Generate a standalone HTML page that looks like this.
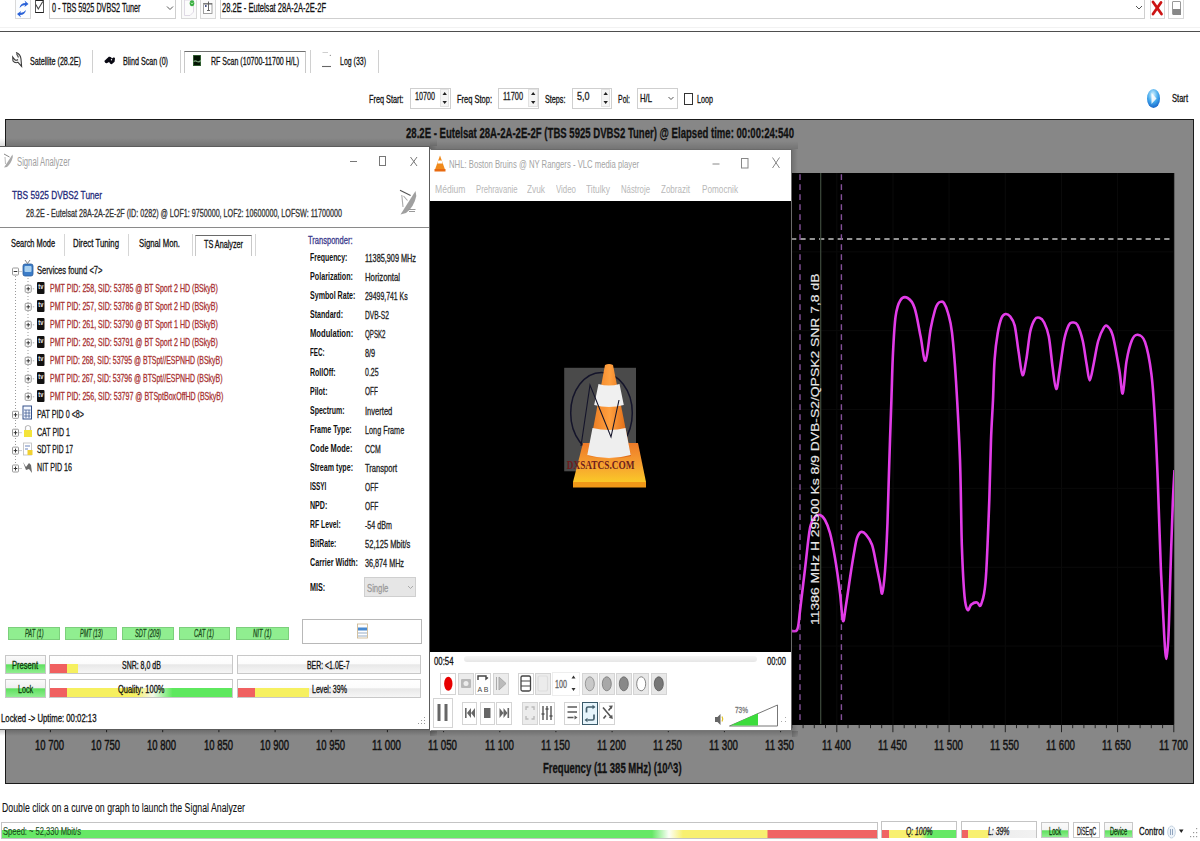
<!DOCTYPE html>
<html><head><meta charset="utf-8"><title>RF Scan</title>
<style>
html,body{margin:0;padding:0;width:1200px;height:841px;overflow:hidden;background:#fff;position:relative;font-family:"Liberation Sans",sans-serif}
.t{position:absolute;white-space:pre;transform-origin:0 0;-webkit-text-stroke:0.3px currentColor}
svg{position:absolute;left:0;top:0}
</style></head><body>
<div style="position:absolute;left:15px;top:-1px;width:15.5px;height:19.5px;border:1px solid #d9d9d9;box-sizing:border-box;background:#fbfdff"></div>
<svg width="1200" height="841" style="pointer-events:none"><path d="M19.5 8 q1 -5 6 -5 l-1 -2.5 l4 3.5 l-4 3 l0.5 -2 q-3 0 -5.5 3z" fill="#2a62d8"/><path d="M26 10 q-1 5 -6 5 l1 2.5 l-4 -3.5 l4 -3 l-0.5 2 q3 0 5.5 -3z" fill="#2a62d8"/></svg>
<div style="position:absolute;left:34.5px;top:-1px;width:9.0px;height:13.5px;border:1.2px solid #555;border-top:2px solid #222;border-bottom:1.5px solid #222;box-sizing:border-box;background:#fff"></div>
<svg width="1200" height="841"><path d="M35.8 4.5 l2.5 4.5 l4.5 -7.5" stroke="#444" stroke-width="1.1" fill="none"/></svg>
<div style="position:absolute;left:49px;top:-1px;width:127px;height:19.5px;border:1px solid #cfcfcf;box-sizing:border-box;background:#fff"></div>
<span class="t" style="left:51.5px;top:1.6px;font:normal normal 12px/12px 'Liberation Sans';color:#111;transform:scaleX(0.6012);">0 - TBS 5925 DVBS2 Tuner</span>
<svg width="1200" height="841"><path d="M167 6.5 l3 3 l3 -3" stroke="#555" stroke-width="1" fill="none"/></svg>
<div style="position:absolute;left:181px;top:-1px;width:15.5px;height:19.5px;border:1px solid #d9d9d9;box-sizing:border-box;background:#fafafa"></div>
<svg width="1200" height="841"><path d="M184.5 0 h9 v12 l-3.5 3.5 h-5.5z" fill="#fcfcfc" stroke="#d8d0e0" stroke-width="0.8"/><ellipse cx="192" cy="3.2" rx="2.3" ry="3" fill="#3cb043"/><path d="M190.8 2.5 l1.2 1.5 l1.2 -1.5" stroke="#bff0bf" stroke-width="0.8" fill="none"/></svg>
<div style="position:absolute;left:200px;top:-1px;width:16px;height:19.5px;border:1px solid #d9d9d9;box-sizing:border-box;background:#fafafa"></div>
<svg width="1200" height="841"><rect x="203.5" y="3.5" width="8.5" height="10" fill="#fff" stroke="#888" stroke-width="0.8"/><path d="M204 4 h8 M208.5 1.5 v9 M207 10.5 h3" stroke="#555" stroke-width="0.9"/><rect x="205" y="5.2" width="1.6" height="1.6" fill="#1a2a6a"/></svg>
<div style="position:absolute;left:220px;top:-1px;width:925px;height:19.5px;border:1px solid #cfcfcf;box-sizing:border-box;background:#fff"></div>
<span class="t" style="left:222.0px;top:1.6px;font:normal normal 12px/12px 'Liberation Sans';color:#111;transform:scaleX(0.6287);">28.2E - Eutelsat 28A-2A-2E-2F</span>
<svg width="1200" height="841"><path d="M1136 6 l3 3 l3 -3" stroke="#555" stroke-width="1" fill="none"/></svg>
<div style="position:absolute;left:1149.5px;top:-1px;width:15.5px;height:19.5px;border:1px solid #d9d9d9;box-sizing:border-box;background:#fff"></div>
<svg width="1200" height="841"><path d="M1153 2 L1161.5 14 M1161 2.5 L1153 14" stroke="#cc1414" stroke-width="2.8" stroke-linecap="round"/></svg>
<div style="position:absolute;left:1168px;top:-1px;width:16px;height:19.5px;border:1px solid #d9d9d9;box-sizing:border-box;background:#fff"></div>
<div style="position:absolute;left:1172px;top:1px;width:9px;height:14px;border:1px solid #999;box-sizing:border-box;border-radius:1px"></div>
<div style="position:absolute;left:1172.5px;top:9px;width:8.0px;height:5.5px;background:#888"></div>
<div style="position:absolute;left:0px;top:30.8px;width:1200px;height:1.4999999999999964px;background:#4e4e4e"></div>
<div style="position:absolute;left:0px;top:27px;width:1200px;height:1px;background:#f2f2f2"></div>
<svg width="1200" height="841"><path d="M16 52.5 q4.5 1.5 5 6.5 l0.6 7.3 l-3.6 -4 q-3 1.2 -5 -1.3 l-0.3 -4 l2.2 2.8 q1.5 1 3 -0.3" fill="#f4f4f4" stroke="#3a3a3a" stroke-width="1.1"/><path d="M16.5 53.5 l2 4" stroke="#555" stroke-width="1.3"/><path d="M104.3 61 l4.5 -4.2 q1.5 -0.5 2.5 0.8 l0.5 1 l2.2 -1.3 l1 1 l-0.4 3.5 l-2.6 2.3 q-1.5 0.5 -2.3 -1 l-0.6 -1 l-2.4 1.2 q-1.6 0.2 -2.4 -2.3z" fill="#0a0a14"/><circle cx="111.5" cy="59.8" r="0.7" fill="#fff"/></svg>
<span class="t" style="left:30.0px;top:55.6px;font:normal normal 11px/11px 'Liberation Sans';color:#111;transform:scaleX(0.6516);">Satellite (28.2E)</span>
<div style="position:absolute;left:92px;top:50px;width:1px;height:23px;background:#d0d0d0"></div>
<span class="t" style="left:123.0px;top:55.6px;font:normal normal 11px/11px 'Liberation Sans';color:#111;transform:scaleX(0.6513);">Blind Scan (0)</span>
<div style="position:absolute;left:179.5px;top:50px;width:1.0px;height:23px;background:#d0d0d0"></div>
<div style="position:absolute;left:183.5px;top:50.5px;width:122.0px;height:22.5px;border-top:1.5px solid #707070;border-left:1px solid #c8c8c8;border-right:1px solid #c8c8c8;box-sizing:border-box;background:#fff"></div>
<div style="position:absolute;left:192.7px;top:55.2px;width:8.600000000000023px;height:11.0px;background:#031403;border:0.8px solid #2e5a2e;box-sizing:border-box;border-radius:0.5px"></div>
<svg width="1200" height="841"><path d="M193.5 61.5 q2 -1.2 3.5 0 q2 1 4 -1" stroke="#7aa27a" stroke-width="1.1" fill="none"/></svg>
<span class="t" style="left:211.0px;top:56.4px;font:normal normal 11px/11px 'Liberation Sans';color:#111;transform:scaleX(0.6406);">RF Scan (10700-11700 H/L)</span>
<div style="position:absolute;left:309.5px;top:50px;width:1.0px;height:23px;background:#d0d0d0"></div>
<svg width="1200" height="841"><path d="M322.5 52.5 h5.5" stroke="#cfcfcf" stroke-width="1"/><circle cx="330.3" cy="55.3" r="0.6" fill="#777"/><path d="M322 66.5 h9" stroke="#666" stroke-width="1.1"/></svg>
<span class="t" style="left:340.0px;top:56.4px;font:normal normal 11px/11px 'Liberation Sans';color:#111;transform:scaleX(0.6344);">Log (33)</span>
<div style="position:absolute;left:377.5px;top:50px;width:1.0px;height:23px;background:#d0d0d0"></div>
<span class="t" style="left:368.5px;top:93.5px;font:normal normal 11px/11px 'Liberation Sans';color:#111;transform:scaleX(0.6639);">Freq Start:</span>
<div style="position:absolute;left:410px;top:87.5px;width:40.5px;height:21.0px;border:1px solid #cfcfcf;box-sizing:border-box;background:#fff"></div>
<span class="t" style="left:415.0px;top:90.7px;font:normal normal 11px/11px 'Liberation Sans';color:#222;transform:scaleX(0.6537);">10700</span>
<div style="position:absolute;left:439.5px;top:89px;width:9.5px;height:18px;border:1px solid #e2e2e2;box-sizing:border-box;background:#f4f4f4"></div>
<svg width="1200" height="841"><path d="M442.5 95 l2.2 -3 l2.2 3z M442.5 101 l2.2 3 l2.2 -3z" fill="#222"/></svg>
<span class="t" style="left:456.5px;top:93.5px;font:normal normal 11px/11px 'Liberation Sans';color:#111;transform:scaleX(0.6815);">Freq Stop:</span>
<div style="position:absolute;left:498px;top:87.5px;width:41px;height:21.0px;border:1px solid #cfcfcf;box-sizing:border-box;background:#fff"></div>
<span class="t" style="left:503.0px;top:90.7px;font:normal normal 11px/11px 'Liberation Sans';color:#222;transform:scaleX(0.6716);">11700</span>
<div style="position:absolute;left:528px;top:89px;width:9.5px;height:18px;border:1px solid #e2e2e2;box-sizing:border-box;background:#f4f4f4"></div>
<svg width="1200" height="841"><path d="M531 95 l2.2 -3 l2.2 3z M531 101 l2.2 3 l2.2 -3z" fill="#222"/></svg>
<span class="t" style="left:544.5px;top:93.5px;font:normal normal 11px/11px 'Liberation Sans';color:#111;transform:scaleX(0.6573);">Steps:</span>
<div style="position:absolute;left:572px;top:87.5px;width:39.5px;height:21.0px;border:1px solid #cfcfcf;box-sizing:border-box;background:#fff"></div>
<span class="t" style="left:577.0px;top:90.7px;font:normal normal 11px/11px 'Liberation Sans';color:#222;transform:scaleX(0.8172);">5,0</span>
<div style="position:absolute;left:600.5px;top:89px;width:9.5px;height:18px;border:1px solid #e2e2e2;box-sizing:border-box;background:#f4f4f4"></div>
<svg width="1200" height="841"><path d="M603.5 95 l2.2 -3 l2.2 3z M603.5 101 l2.2 3 l2.2 -3z" fill="#222"/></svg>
<span class="t" style="left:618.0px;top:93.5px;font:normal normal 11px/11px 'Liberation Sans';color:#111;transform:scaleX(0.6326);">Pol:</span>
<div style="position:absolute;left:637px;top:88px;width:41px;height:20.5px;border:1px solid #cfcfcf;box-sizing:border-box;background:#fff"></div>
<span class="t" style="left:640.0px;top:93.2px;font:normal normal 11px/11px 'Liberation Sans';color:#111;transform:scaleX(0.7007);">H/L</span>
<svg width="1200" height="841"><path d="M668.5 97 l2.5 2.5 l2.5 -2.5" stroke="#555" stroke-width="1" fill="none"/></svg>
<div style="position:absolute;left:683.5px;top:93px;width:9.0px;height:11.5px;border:1.2px solid #333;box-sizing:border-box;background:#fff"></div>
<span class="t" style="left:697.0px;top:93.5px;font:normal normal 11px/11px 'Liberation Sans';color:#111;transform:scaleX(0.6535);">Loop</span>
<svg width="1200" height="841"><defs><radialGradient id="pb" cx="0.45" cy="0.3" r="0.8"><stop offset="0" stop-color="#d8f4ff"/><stop offset="0.5" stop-color="#41a8ec"/><stop offset="1" stop-color="#0a50c0"/></radialGradient></defs><ellipse cx="1153.5" cy="98.5" rx="6.5" ry="9.5" fill="url(#pb)"/><path d="M1151.5 93 l5 5.5 l-5 5.5z" fill="#fff" opacity="0.85"/></svg>
<span class="t" style="left:1172.0px;top:93.4px;font:normal normal 11px/11px 'Liberation Sans';color:#111;transform:scaleX(0.6886);">Start</span>
<div style="position:absolute;left:5px;top:119px;width:1189px;height:665px;background:#878787;border:1.5px solid #1a1a1a;box-sizing:border-box"></div>
<div style="position:absolute;left:50px;top:172.7px;width:1124px;height:552.0px;background:#000"></div>
<span class="t" style="left:405.8px;top:126.2px;font:normal bold 14.5px/14.5px 'Liberation Sans';color:#111;transform:scaleX(0.6603);">28.2E - Eutelsat 28A-2A-2E-2F (TBS 5925 DVBS2 Tuner) @ Elapsed time: 00:00:24:540</span>
<span class="t" style="left:542.7px;top:761.0px;font:normal bold 14.5px/14.5px 'Liberation Sans';color:#111;transform:scaleX(0.6577);">Frequency (11 385 MHz) (10^3)</span>
<svg width="1200" height="841"><line x1="50.4" y1="173" x2="50.4" y2="724.5" stroke="#0a0a0a" stroke-width="1"/><line x1="106.6" y1="173" x2="106.6" y2="724.5" stroke="#0a0a0a" stroke-width="1"/><line x1="162.7" y1="173" x2="162.7" y2="724.5" stroke="#0a0a0a" stroke-width="1"/><line x1="218.9" y1="173" x2="218.9" y2="724.5" stroke="#0a0a0a" stroke-width="1"/><line x1="275.1" y1="173" x2="275.1" y2="724.5" stroke="#0a0a0a" stroke-width="1"/><line x1="331.2" y1="173" x2="331.2" y2="724.5" stroke="#0a0a0a" stroke-width="1"/><line x1="387.4" y1="173" x2="387.4" y2="724.5" stroke="#0a0a0a" stroke-width="1"/><line x1="443.6" y1="173" x2="443.6" y2="724.5" stroke="#0a0a0a" stroke-width="1"/><line x1="499.8" y1="173" x2="499.8" y2="724.5" stroke="#0a0a0a" stroke-width="1"/><line x1="555.9" y1="173" x2="555.9" y2="724.5" stroke="#0a0a0a" stroke-width="1"/><line x1="612.1" y1="173" x2="612.1" y2="724.5" stroke="#0a0a0a" stroke-width="1"/><line x1="668.3" y1="173" x2="668.3" y2="724.5" stroke="#0a0a0a" stroke-width="1"/><line x1="724.4" y1="173" x2="724.4" y2="724.5" stroke="#0a0a0a" stroke-width="1"/><line x1="780.6" y1="173" x2="780.6" y2="724.5" stroke="#0a0a0a" stroke-width="1"/><line x1="836.8" y1="173" x2="836.8" y2="724.5" stroke="#0a0a0a" stroke-width="1"/><line x1="893.0" y1="173" x2="893.0" y2="724.5" stroke="#0a0a0a" stroke-width="1"/><line x1="949.1" y1="173" x2="949.1" y2="724.5" stroke="#0a0a0a" stroke-width="1"/><line x1="1005.3" y1="173" x2="1005.3" y2="724.5" stroke="#0a0a0a" stroke-width="1"/><line x1="1061.5" y1="173" x2="1061.5" y2="724.5" stroke="#0a0a0a" stroke-width="1"/><line x1="1117.6" y1="173" x2="1117.6" y2="724.5" stroke="#0a0a0a" stroke-width="1"/><line x1="1173.8" y1="173" x2="1173.8" y2="724.5" stroke="#0a0a0a" stroke-width="1"/><line x1="50" y1="251.9" x2="1174" y2="251.9" stroke="#0a0a0a" stroke-width="1"/><line x1="50" y1="330.7" x2="1174" y2="330.7" stroke="#0a0a0a" stroke-width="1"/><line x1="50" y1="409.6" x2="1174" y2="409.6" stroke="#0a0a0a" stroke-width="1"/><line x1="50" y1="488.4" x2="1174" y2="488.4" stroke="#0a0a0a" stroke-width="1"/><line x1="50" y1="567.3" x2="1174" y2="567.3" stroke="#0a0a0a" stroke-width="1"/><line x1="50" y1="646.1" x2="1174" y2="646.1" stroke="#0a0a0a" stroke-width="1"/><line x1="50.4" y1="724.7" x2="50.4" y2="732.2" stroke="#222" stroke-width="1"/><line x1="61.6" y1="724.7" x2="61.6" y2="728.2" stroke="#222" stroke-width="1"/><line x1="72.9" y1="724.7" x2="72.9" y2="728.2" stroke="#222" stroke-width="1"/><line x1="84.1" y1="724.7" x2="84.1" y2="728.2" stroke="#222" stroke-width="1"/><line x1="95.3" y1="724.7" x2="95.3" y2="728.2" stroke="#222" stroke-width="1"/><line x1="106.6" y1="724.7" x2="106.6" y2="732.2" stroke="#222" stroke-width="1"/><line x1="117.8" y1="724.7" x2="117.8" y2="728.2" stroke="#222" stroke-width="1"/><line x1="129.0" y1="724.7" x2="129.0" y2="728.2" stroke="#222" stroke-width="1"/><line x1="140.3" y1="724.7" x2="140.3" y2="728.2" stroke="#222" stroke-width="1"/><line x1="151.5" y1="724.7" x2="151.5" y2="728.2" stroke="#222" stroke-width="1"/><line x1="162.7" y1="724.7" x2="162.7" y2="732.2" stroke="#222" stroke-width="1"/><line x1="174.0" y1="724.7" x2="174.0" y2="728.2" stroke="#222" stroke-width="1"/><line x1="185.2" y1="724.7" x2="185.2" y2="728.2" stroke="#222" stroke-width="1"/><line x1="196.4" y1="724.7" x2="196.4" y2="728.2" stroke="#222" stroke-width="1"/><line x1="207.7" y1="724.7" x2="207.7" y2="728.2" stroke="#222" stroke-width="1"/><line x1="218.9" y1="724.7" x2="218.9" y2="732.2" stroke="#222" stroke-width="1"/><line x1="230.1" y1="724.7" x2="230.1" y2="728.2" stroke="#222" stroke-width="1"/><line x1="241.4" y1="724.7" x2="241.4" y2="728.2" stroke="#222" stroke-width="1"/><line x1="252.6" y1="724.7" x2="252.6" y2="728.2" stroke="#222" stroke-width="1"/><line x1="263.8" y1="724.7" x2="263.8" y2="728.2" stroke="#222" stroke-width="1"/><line x1="275.1" y1="724.7" x2="275.1" y2="732.2" stroke="#222" stroke-width="1"/><line x1="286.3" y1="724.7" x2="286.3" y2="728.2" stroke="#222" stroke-width="1"/><line x1="297.5" y1="724.7" x2="297.5" y2="728.2" stroke="#222" stroke-width="1"/><line x1="308.8" y1="724.7" x2="308.8" y2="728.2" stroke="#222" stroke-width="1"/><line x1="320.0" y1="724.7" x2="320.0" y2="728.2" stroke="#222" stroke-width="1"/><line x1="331.2" y1="724.7" x2="331.2" y2="732.2" stroke="#222" stroke-width="1"/><line x1="342.5" y1="724.7" x2="342.5" y2="728.2" stroke="#222" stroke-width="1"/><line x1="353.7" y1="724.7" x2="353.7" y2="728.2" stroke="#222" stroke-width="1"/><line x1="365.0" y1="724.7" x2="365.0" y2="728.2" stroke="#222" stroke-width="1"/><line x1="376.2" y1="724.7" x2="376.2" y2="728.2" stroke="#222" stroke-width="1"/><line x1="387.4" y1="724.7" x2="387.4" y2="732.2" stroke="#222" stroke-width="1"/><line x1="398.7" y1="724.7" x2="398.7" y2="728.2" stroke="#222" stroke-width="1"/><line x1="409.9" y1="724.7" x2="409.9" y2="728.2" stroke="#222" stroke-width="1"/><line x1="421.1" y1="724.7" x2="421.1" y2="728.2" stroke="#222" stroke-width="1"/><line x1="432.4" y1="724.7" x2="432.4" y2="728.2" stroke="#222" stroke-width="1"/><line x1="443.6" y1="724.7" x2="443.6" y2="732.2" stroke="#222" stroke-width="1"/><line x1="454.8" y1="724.7" x2="454.8" y2="728.2" stroke="#222" stroke-width="1"/><line x1="466.1" y1="724.7" x2="466.1" y2="728.2" stroke="#222" stroke-width="1"/><line x1="477.3" y1="724.7" x2="477.3" y2="728.2" stroke="#222" stroke-width="1"/><line x1="488.5" y1="724.7" x2="488.5" y2="728.2" stroke="#222" stroke-width="1"/><line x1="499.8" y1="724.7" x2="499.8" y2="732.2" stroke="#222" stroke-width="1"/><line x1="511.0" y1="724.7" x2="511.0" y2="728.2" stroke="#222" stroke-width="1"/><line x1="522.2" y1="724.7" x2="522.2" y2="728.2" stroke="#222" stroke-width="1"/><line x1="533.5" y1="724.7" x2="533.5" y2="728.2" stroke="#222" stroke-width="1"/><line x1="544.7" y1="724.7" x2="544.7" y2="728.2" stroke="#222" stroke-width="1"/><line x1="555.9" y1="724.7" x2="555.9" y2="732.2" stroke="#222" stroke-width="1"/><line x1="567.2" y1="724.7" x2="567.2" y2="728.2" stroke="#222" stroke-width="1"/><line x1="578.4" y1="724.7" x2="578.4" y2="728.2" stroke="#222" stroke-width="1"/><line x1="589.6" y1="724.7" x2="589.6" y2="728.2" stroke="#222" stroke-width="1"/><line x1="600.9" y1="724.7" x2="600.9" y2="728.2" stroke="#222" stroke-width="1"/><line x1="612.1" y1="724.7" x2="612.1" y2="732.2" stroke="#222" stroke-width="1"/><line x1="623.3" y1="724.7" x2="623.3" y2="728.2" stroke="#222" stroke-width="1"/><line x1="634.6" y1="724.7" x2="634.6" y2="728.2" stroke="#222" stroke-width="1"/><line x1="645.8" y1="724.7" x2="645.8" y2="728.2" stroke="#222" stroke-width="1"/><line x1="657.0" y1="724.7" x2="657.0" y2="728.2" stroke="#222" stroke-width="1"/><line x1="668.3" y1="724.7" x2="668.3" y2="732.2" stroke="#222" stroke-width="1"/><line x1="679.5" y1="724.7" x2="679.5" y2="728.2" stroke="#222" stroke-width="1"/><line x1="690.7" y1="724.7" x2="690.7" y2="728.2" stroke="#222" stroke-width="1"/><line x1="702.0" y1="724.7" x2="702.0" y2="728.2" stroke="#222" stroke-width="1"/><line x1="713.2" y1="724.7" x2="713.2" y2="728.2" stroke="#222" stroke-width="1"/><line x1="724.4" y1="724.7" x2="724.4" y2="732.2" stroke="#222" stroke-width="1"/><line x1="735.7" y1="724.7" x2="735.7" y2="728.2" stroke="#222" stroke-width="1"/><line x1="746.9" y1="724.7" x2="746.9" y2="728.2" stroke="#222" stroke-width="1"/><line x1="758.1" y1="724.7" x2="758.1" y2="728.2" stroke="#222" stroke-width="1"/><line x1="769.4" y1="724.7" x2="769.4" y2="728.2" stroke="#222" stroke-width="1"/><line x1="780.6" y1="724.7" x2="780.6" y2="732.2" stroke="#222" stroke-width="1"/><line x1="791.8" y1="724.7" x2="791.8" y2="728.2" stroke="#222" stroke-width="1"/><line x1="803.1" y1="724.7" x2="803.1" y2="728.2" stroke="#222" stroke-width="1"/><line x1="814.3" y1="724.7" x2="814.3" y2="728.2" stroke="#222" stroke-width="1"/><line x1="825.5" y1="724.7" x2="825.5" y2="728.2" stroke="#222" stroke-width="1"/><line x1="836.8" y1="724.7" x2="836.8" y2="732.2" stroke="#222" stroke-width="1"/><line x1="848.0" y1="724.7" x2="848.0" y2="728.2" stroke="#222" stroke-width="1"/><line x1="859.2" y1="724.7" x2="859.2" y2="728.2" stroke="#222" stroke-width="1"/><line x1="870.5" y1="724.7" x2="870.5" y2="728.2" stroke="#222" stroke-width="1"/><line x1="881.7" y1="724.7" x2="881.7" y2="728.2" stroke="#222" stroke-width="1"/><line x1="892.9" y1="724.7" x2="892.9" y2="732.2" stroke="#222" stroke-width="1"/><line x1="904.2" y1="724.7" x2="904.2" y2="728.2" stroke="#222" stroke-width="1"/><line x1="915.4" y1="724.7" x2="915.4" y2="728.2" stroke="#222" stroke-width="1"/><line x1="926.7" y1="724.7" x2="926.7" y2="728.2" stroke="#222" stroke-width="1"/><line x1="937.9" y1="724.7" x2="937.9" y2="728.2" stroke="#222" stroke-width="1"/><line x1="949.1" y1="724.7" x2="949.1" y2="732.2" stroke="#222" stroke-width="1"/><line x1="960.4" y1="724.7" x2="960.4" y2="728.2" stroke="#222" stroke-width="1"/><line x1="971.6" y1="724.7" x2="971.6" y2="728.2" stroke="#222" stroke-width="1"/><line x1="982.8" y1="724.7" x2="982.8" y2="728.2" stroke="#222" stroke-width="1"/><line x1="994.1" y1="724.7" x2="994.1" y2="728.2" stroke="#222" stroke-width="1"/><line x1="1005.3" y1="724.7" x2="1005.3" y2="732.2" stroke="#222" stroke-width="1"/><line x1="1016.5" y1="724.7" x2="1016.5" y2="728.2" stroke="#222" stroke-width="1"/><line x1="1027.8" y1="724.7" x2="1027.8" y2="728.2" stroke="#222" stroke-width="1"/><line x1="1039.0" y1="724.7" x2="1039.0" y2="728.2" stroke="#222" stroke-width="1"/><line x1="1050.2" y1="724.7" x2="1050.2" y2="728.2" stroke="#222" stroke-width="1"/><line x1="1061.5" y1="724.7" x2="1061.5" y2="732.2" stroke="#222" stroke-width="1"/><line x1="1072.7" y1="724.7" x2="1072.7" y2="728.2" stroke="#222" stroke-width="1"/><line x1="1083.9" y1="724.7" x2="1083.9" y2="728.2" stroke="#222" stroke-width="1"/><line x1="1095.2" y1="724.7" x2="1095.2" y2="728.2" stroke="#222" stroke-width="1"/><line x1="1106.4" y1="724.7" x2="1106.4" y2="728.2" stroke="#222" stroke-width="1"/><line x1="1117.6" y1="724.7" x2="1117.6" y2="732.2" stroke="#222" stroke-width="1"/><line x1="1128.9" y1="724.7" x2="1128.9" y2="728.2" stroke="#222" stroke-width="1"/><line x1="1140.1" y1="724.7" x2="1140.1" y2="728.2" stroke="#222" stroke-width="1"/><line x1="1151.3" y1="724.7" x2="1151.3" y2="728.2" stroke="#222" stroke-width="1"/><line x1="1162.6" y1="724.7" x2="1162.6" y2="728.2" stroke="#222" stroke-width="1"/><line x1="1173.8" y1="724.7" x2="1173.8" y2="732.2" stroke="#222" stroke-width="1"/><line x1="53.93" y1="239" x2="1172" y2="239" stroke="#c4c4c4" stroke-width="1.7" stroke-dasharray="5.3 4.03"/><line x1="800" y1="174.3" x2="800" y2="724" stroke="#84509a" stroke-width="1.4" stroke-dasharray="5.8 4.2"/><line x1="841.4" y1="174.3" x2="841.4" y2="724" stroke="#84509a" stroke-width="1.4" stroke-dasharray="5.8 4.2"/><line x1="820.7" y1="173" x2="820.7" y2="724" stroke="#3e4a3c" stroke-width="1.2"/><clipPath id="pc"><rect x="50" y="172.7" width="1124" height="552"/></clipPath><path d="M789.0 630.0 C790.3 630.0 795.2 633.2 797.0 630.0 C798.8 626.8 798.7 621.2 800.0 611.0 C801.3 600.8 803.3 582.8 805.0 569.0 C806.7 555.2 808.3 536.7 810.0 528.0 C811.7 519.3 813.3 519.2 815.0 517.0 C816.7 514.8 818.3 514.5 820.0 515.0 C821.7 515.5 823.3 517.0 825.0 520.0 C826.7 523.0 828.3 526.7 830.0 533.0 C831.7 539.3 833.3 548.0 835.0 558.0 C836.7 568.0 838.7 582.5 840.0 593.0 C841.3 603.5 842.0 619.0 843.0 621.0 C844.0 623.0 844.8 612.2 846.0 605.0 C847.2 597.8 848.7 586.7 850.0 578.0 C851.3 569.3 852.8 559.7 854.0 553.0 C855.2 546.3 855.8 541.5 857.0 538.0 C858.2 534.5 859.5 532.6 861.0 532.0 C862.5 531.4 864.2 532.5 866.0 534.6 C867.8 536.7 870.3 540.0 872.0 544.7 C873.7 549.4 874.7 556.6 876.0 563.0 C877.3 569.4 879.0 578.0 880.0 583.0 C881.0 588.0 881.4 595.3 882.2 593.3 C883.0 591.3 884.1 582.8 885.0 571.0 C885.9 559.2 886.8 540.7 887.5 522.5 C888.2 504.3 888.6 482.4 889.3 462.0 C889.9 441.6 890.8 418.2 891.4 400.0 C892.0 381.8 892.3 366.7 893.0 352.8 C893.7 338.9 894.4 325.2 895.6 316.4 C896.8 307.6 898.4 303.3 900.4 300.2 C902.4 297.1 905.3 296.7 907.7 298.0 C910.1 299.3 912.5 301.6 914.6 308.0 C916.8 314.4 918.8 327.8 920.6 336.6 C922.4 345.4 923.8 362.2 925.5 360.8 C927.2 359.4 929.1 337.0 930.7 328.5 C932.3 320.0 933.8 314.2 935.0 310.0 C936.2 305.8 937.0 304.9 938.0 303.5 C939.0 302.1 940.0 301.9 941.0 301.8 C942.0 301.7 942.8 301.1 944.0 303.0 C945.2 304.9 946.7 308.1 948.0 313.0 C949.3 317.9 950.7 321.2 952.0 332.5 C953.3 343.8 954.7 359.8 956.0 381.0 C957.3 402.2 959.0 432.3 960.0 460.0 C961.0 487.7 961.1 524.2 961.9 547.0 C962.7 569.8 963.6 586.3 964.6 596.8 C965.6 607.3 966.5 608.7 967.6 610.0 C968.7 611.3 969.8 605.6 971.4 604.4 C973.0 603.1 975.7 602.2 977.1 602.5 C978.5 602.8 979.1 605.8 979.8 606.0 C980.5 606.2 980.5 606.0 981.2 604.0 C981.9 602.0 983.1 599.5 984.0 594.0 C984.9 588.5 985.4 586.7 986.3 571.0 C987.2 555.3 988.5 521.8 989.3 500.0 C990.1 478.2 990.4 456.7 991.0 440.0 C991.6 423.3 992.4 413.4 993.0 400.0 C993.6 386.6 993.8 370.7 994.6 359.6 C995.4 348.5 996.5 340.3 997.7 333.3 C998.9 326.3 1000.3 321.0 1001.6 317.8 C1002.9 314.6 1004.1 314.2 1005.5 314.0 C1006.9 313.8 1008.5 314.4 1010.0 316.3 C1011.5 318.2 1013.3 319.7 1014.7 325.6 C1016.1 331.5 1017.3 343.7 1018.6 351.9 C1019.9 360.1 1021.2 373.7 1022.5 375.0 C1023.8 376.3 1025.0 366.8 1026.3 359.6 C1027.6 352.4 1028.8 338.5 1030.2 331.8 C1031.6 325.1 1033.2 321.7 1034.8 319.4 C1036.3 317.1 1038.0 317.3 1039.5 317.8 C1041.0 318.3 1042.5 319.4 1044.1 322.5 C1045.6 325.6 1047.4 328.9 1048.8 336.4 C1050.2 343.9 1051.4 358.5 1052.6 367.3 C1053.8 376.1 1055.0 388.5 1056.2 389.0 C1057.4 389.5 1058.3 378.6 1059.6 370.4 C1060.9 362.1 1062.7 347.1 1064.2 339.5 C1065.8 331.9 1067.5 327.6 1068.9 324.8 C1070.3 322.0 1071.3 322.5 1072.7 322.5 C1074.1 322.5 1075.7 321.7 1077.4 324.8 C1079.1 327.9 1081.3 334.4 1082.8 341.0 C1084.3 347.6 1085.4 357.6 1086.6 364.2 C1087.8 370.8 1088.5 380.5 1089.7 380.5 C1090.9 380.5 1092.2 370.8 1093.6 364.2 C1095.0 357.6 1096.5 347.1 1098.2 341.0 C1099.9 334.9 1102.2 330.3 1103.7 327.9 C1105.2 325.4 1106.0 325.0 1107.5 326.3 C1109.0 327.6 1110.8 328.4 1112.8 335.7 C1114.8 343.0 1117.6 360.4 1119.3 370.0 C1121.0 379.6 1121.5 394.9 1122.7 393.5 C1123.9 392.1 1125.0 370.3 1126.5 361.4 C1128.0 352.5 1130.1 344.4 1132.0 340.0 C1133.9 335.6 1135.5 334.5 1137.7 334.8 C1139.9 335.1 1142.7 335.5 1145.0 342.0 C1147.3 348.5 1149.8 361.5 1151.4 374.0 C1153.0 386.5 1153.7 399.2 1154.8 417.0 C1155.9 434.8 1156.8 456.0 1157.8 481.0 C1158.8 506.0 1159.7 541.3 1160.8 567.0 C1161.9 592.7 1163.3 619.7 1164.2 635.0 C1165.1 650.3 1165.7 659.0 1166.4 659.0 C1167.1 659.0 1167.8 650.3 1168.5 635.0 C1169.2 619.7 1169.9 589.1 1170.6 567.0 C1171.3 544.9 1172.1 518.8 1172.8 502.6 C1173.5 486.4 1174.2 475.4 1174.5 470.0" fill="none" stroke="#e23ce8" stroke-width="2.6" stroke-linejoin="round" clip-path="url(#pc)"/><text transform="translate(818.8 625) rotate(-90) scale(1.18 1)" font-family="Liberation Sans" font-size="11.8" fill="#e8e8e8" stroke="#e8e8e8" stroke-width="0.15">11386 MHz H 29500 Ks 8/9 DVB-S2/QPSK2 SNR 7,8 dB</text></svg>
<span class="t" style="left:35.1px;top:737.7px;font:normal normal 14px/14px 'Liberation Sans';color:#111;transform:scaleX(0.6771);-webkit-text-stroke:0.45px #111">10 700</span>
<span class="t" style="left:91.3px;top:737.7px;font:normal normal 14px/14px 'Liberation Sans';color:#111;transform:scaleX(0.6771);-webkit-text-stroke:0.45px #111">10 750</span>
<span class="t" style="left:147.4px;top:737.7px;font:normal normal 14px/14px 'Liberation Sans';color:#111;transform:scaleX(0.6771);-webkit-text-stroke:0.45px #111">10 800</span>
<span class="t" style="left:203.6px;top:737.7px;font:normal normal 14px/14px 'Liberation Sans';color:#111;transform:scaleX(0.6771);-webkit-text-stroke:0.45px #111">10 850</span>
<span class="t" style="left:259.8px;top:737.7px;font:normal normal 14px/14px 'Liberation Sans';color:#111;transform:scaleX(0.6771);-webkit-text-stroke:0.45px #111">10 900</span>
<span class="t" style="left:315.9px;top:737.7px;font:normal normal 14px/14px 'Liberation Sans';color:#111;transform:scaleX(0.6771);-webkit-text-stroke:0.45px #111">10 950</span>
<span class="t" style="left:372.1px;top:737.7px;font:normal normal 14px/14px 'Liberation Sans';color:#111;transform:scaleX(0.6941);-webkit-text-stroke:0.45px #111">11 000</span>
<span class="t" style="left:428.3px;top:737.7px;font:normal normal 14px/14px 'Liberation Sans';color:#111;transform:scaleX(0.6941);-webkit-text-stroke:0.45px #111">11 050</span>
<span class="t" style="left:484.5px;top:737.7px;font:normal normal 14px/14px 'Liberation Sans';color:#111;transform:scaleX(0.6941);-webkit-text-stroke:0.45px #111">11 100</span>
<span class="t" style="left:540.6px;top:737.7px;font:normal normal 14px/14px 'Liberation Sans';color:#111;transform:scaleX(0.6941);-webkit-text-stroke:0.45px #111">11 150</span>
<span class="t" style="left:596.8px;top:737.7px;font:normal normal 14px/14px 'Liberation Sans';color:#111;transform:scaleX(0.6941);-webkit-text-stroke:0.45px #111">11 200</span>
<span class="t" style="left:653.0px;top:737.7px;font:normal normal 14px/14px 'Liberation Sans';color:#111;transform:scaleX(0.6941);-webkit-text-stroke:0.45px #111">11 250</span>
<span class="t" style="left:709.1px;top:737.7px;font:normal normal 14px/14px 'Liberation Sans';color:#111;transform:scaleX(0.6941);-webkit-text-stroke:0.45px #111">11 300</span>
<span class="t" style="left:765.3px;top:737.7px;font:normal normal 14px/14px 'Liberation Sans';color:#111;transform:scaleX(0.6941);-webkit-text-stroke:0.45px #111">11 350</span>
<span class="t" style="left:821.5px;top:737.7px;font:normal normal 14px/14px 'Liberation Sans';color:#111;transform:scaleX(0.6941);-webkit-text-stroke:0.45px #111">11 400</span>
<span class="t" style="left:877.7px;top:737.7px;font:normal normal 14px/14px 'Liberation Sans';color:#111;transform:scaleX(0.6941);-webkit-text-stroke:0.45px #111">11 450</span>
<span class="t" style="left:933.8px;top:737.7px;font:normal normal 14px/14px 'Liberation Sans';color:#111;transform:scaleX(0.6941);-webkit-text-stroke:0.45px #111">11 500</span>
<span class="t" style="left:990.0px;top:737.7px;font:normal normal 14px/14px 'Liberation Sans';color:#111;transform:scaleX(0.6941);-webkit-text-stroke:0.45px #111">11 550</span>
<span class="t" style="left:1046.2px;top:737.7px;font:normal normal 14px/14px 'Liberation Sans';color:#111;transform:scaleX(0.6941);-webkit-text-stroke:0.45px #111">11 600</span>
<span class="t" style="left:1102.3px;top:737.7px;font:normal normal 14px/14px 'Liberation Sans';color:#111;transform:scaleX(0.6941);-webkit-text-stroke:0.45px #111">11 650</span>
<span class="t" style="left:1158.5px;top:737.7px;font:normal normal 14px/14px 'Liberation Sans';color:#111;transform:scaleX(0.6941);-webkit-text-stroke:0.45px #111">11 700</span>
<div style="position:absolute;left:0px;top:138px;width:437px;height:8px;background:linear-gradient(rgba(0,0,0,0),rgba(0,0,0,.14))"></div>
<div style="position:absolute;left:430px;top:146px;width:7px;height:590px;background:linear-gradient(90deg,rgba(0,0,0,.14),rgba(0,0,0,0))"></div>
<div style="position:absolute;left:0px;top:730px;width:437px;height:6px;background:linear-gradient(rgba(0,0,0,.2),rgba(0,0,0,0))"></div>
<div style="position:absolute;left:-1px;top:146px;width:431px;height:584px;background:#fff;border:1px solid #5c5c5c;box-sizing:border-box"></div>
<svg width="1200" height="841"><path d="M4 154 L9.5 157" stroke="#888" stroke-width="1"/><path d="M12.5 154.5 L4 167.5 L7 167 Q11.5 163 12.8 157 Z" fill="#a8a8a8"/><path d="M5 157 L5.5 164" stroke="#bbb" stroke-width="1"/><path d="M350 161.5 h7" stroke="#777" stroke-width="1"/><rect x="379.5" y="156.5" width="6" height="9" fill="none" stroke="#777" stroke-width="1"/><path d="M410.5 157 l6.5 9 M417 157 l-6.5 9" stroke="#777" stroke-width="1"/><path d="M400 190.3 L410.6 195.5" stroke="#555" stroke-width="1.2"/><path d="M415.5 191 L400.5 214.5 L406 213 Q414 207 416.3 196 Z" fill="#a0a0a0"/><path d="M401.8 195 L403 207 M403.5 196 L407.5 200.5" stroke="#aaa" stroke-width="1.1"/><path d="M408 209.5 h7.5 M409 211.5 h6" stroke="#999" stroke-width="1.2"/></svg>
<span class="t" style="left:17.0px;top:155.5px;font:normal normal 12px/12px 'Liberation Sans';color:#a0a0a0;transform:scaleX(0.6407);-webkit-text-stroke:0">Signal Analyzer</span>
<span class="t" style="left:12.0px;top:189.9px;font:normal normal 11.5px/11.5px 'Liberation Sans';color:#22287a;transform:scaleX(0.7220);">TBS 5925 DVBS2 Tuner</span>
<span class="t" style="left:25.5px;top:207.7px;font:normal normal 11px/11px 'Liberation Sans';color:#333;transform:scaleX(0.6512);">28.2E - Eutelsat 28A-2A-2E-2F (ID: 0282) @ LOF1: 9750000, LOF2: 10600000, LOFSW: 11700000</span>
<div style="position:absolute;left:0px;top:226.8px;width:429px;height:1.1999999999999886px;background:#8a8a8a"></div>
<span class="t" style="left:11.0px;top:238.0px;font:normal normal 10.5px/10.5px 'Liberation Sans';color:#111;transform:scaleX(0.7045);">Search Mode</span>
<div style="position:absolute;left:64px;top:234px;width:1px;height:22px;background:#d6d6d6"></div>
<span class="t" style="left:73.0px;top:238.0px;font:normal normal 10.5px/10.5px 'Liberation Sans';color:#111;transform:scaleX(0.7434);">Direct Tuning</span>
<div style="position:absolute;left:127.5px;top:234px;width:1.0px;height:22px;background:#d6d6d6"></div>
<span class="t" style="left:139.0px;top:238.0px;font:normal normal 10.5px/10.5px 'Liberation Sans';color:#111;transform:scaleX(0.7394);">Signal Mon.</span>
<div style="position:absolute;left:191.5px;top:234px;width:1.0px;height:22px;background:#d6d6d6"></div>
<div style="position:absolute;left:195px;top:235px;width:56.5px;height:21px;border-top:1.5px solid #6a6a6a;border-left:1px solid #c8c8c8;border-right:1px solid #c8c8c8;box-sizing:border-box"></div>
<span class="t" style="left:204.0px;top:238.6px;font:normal normal 10.5px/10.5px 'Liberation Sans';color:#111;transform:scaleX(0.6889);">TS Analyzer</span>
<div style="position:absolute;left:254.5px;top:234px;width:1.0px;height:22px;background:#d6d6d6"></div>
<span class="t" style="left:37.0px;top:264.6px;font:normal normal 10.5px/10.5px 'Liberation Sans';color:#1a1a1a;transform:scaleX(0.7239);">Services found &lt;7&gt;</span>
<span class="t" style="left:49.5px;top:282.6px;font:normal normal 10.5px/10.5px 'Liberation Sans';color:#a83232;transform:scaleX(0.6713);">PMT PID: 258, SID: 53785 @ BT Sport 2 HD (BSkyB)</span>
<span class="t" style="left:49.5px;top:300.6px;font:normal normal 10.5px/10.5px 'Liberation Sans';color:#a83232;transform:scaleX(0.6713);">PMT PID: 257, SID: 53786 @ BT Sport 2 HD (BSkyB)</span>
<span class="t" style="left:49.5px;top:318.6px;font:normal normal 10.5px/10.5px 'Liberation Sans';color:#a83232;transform:scaleX(0.6713);">PMT PID: 261, SID: 53790 @ BT Sport 1 HD (BSkyB)</span>
<span class="t" style="left:49.5px;top:336.6px;font:normal normal 10.5px/10.5px 'Liberation Sans';color:#a83232;transform:scaleX(0.6713);">PMT PID: 262, SID: 53791 @ BT Sport 2 HD (BSkyB)</span>
<span class="t" style="left:49.5px;top:354.6px;font:normal normal 10.5px/10.5px 'Liberation Sans';color:#a83232;transform:scaleX(0.6614);">PMT PID: 268, SID: 53795 @ BTSpt//ESPNHD (BSkyB)</span>
<span class="t" style="left:49.5px;top:372.6px;font:normal normal 10.5px/10.5px 'Liberation Sans';color:#a83232;transform:scaleX(0.6614);">PMT PID: 267, SID: 53796 @ BTSpt//ESPNHD (BSkyB)</span>
<span class="t" style="left:49.5px;top:390.6px;font:normal normal 10.5px/10.5px 'Liberation Sans';color:#a83232;transform:scaleX(0.6714);">PMT PID: 256, SID: 53797 @ BTSptBoxOffHD (BSkyB)</span>
<span class="t" style="left:37.0px;top:408.6px;font:normal normal 10.5px/10.5px 'Liberation Sans';color:#1a1a1a;transform:scaleX(0.6824);">PAT PID 0 &lt;8&gt;</span>
<span class="t" style="left:37.0px;top:426.5px;font:normal normal 10.5px/10.5px 'Liberation Sans';color:#1a1a1a;transform:scaleX(0.6705);">CAT PID 1</span>
<span class="t" style="left:37.0px;top:444.4px;font:normal normal 10.5px/10.5px 'Liberation Sans';color:#1a1a1a;transform:scaleX(0.6448);">SDT PID 17</span>
<span class="t" style="left:37.0px;top:462.3px;font:normal normal 10.5px/10.5px 'Liberation Sans';color:#1a1a1a;transform:scaleX(0.6763);">NIT PID 16</span>
<svg width="1200" height="841"><line x1="15.5" y1="276" x2="15.5" y2="469" stroke="#9a9a9a" stroke-width="1" stroke-dasharray="1 2"/><line x1="28" y1="278" x2="28" y2="397" stroke="#9a9a9a" stroke-width="1" stroke-dasharray="1 2"/><rect x="12.5" y="268.0" width="6" height="7" fill="#fff" stroke="#9a9a9a" stroke-width="1" rx="0.8"/><line x1="13.7" y1="271.5" x2="17.3" y2="271.5" stroke="#333" stroke-width="1"/><line x1="18.5" y1="271.5" x2="21.5" y2="271.5" stroke="#9a9a9a" stroke-width="1" stroke-dasharray="1 1"/><rect x="23" y="264" width="10" height="12" rx="2" fill="#3b7cc8" stroke="#2a5a9a" stroke-width="0.8"/><rect x="24.5" y="266" width="7" height="6" rx="1" fill="#a8d0f0"/><path d="M25 260 l2.5 3.5 l2.5 -3.5" stroke="#666" stroke-width="0.8" fill="none"/><rect x="25.2" y="285.3" width="6" height="7" fill="#fff" stroke="#9a9a9a" stroke-width="1" rx="0.8"/><line x1="26.4" y1="288.8" x2="30.0" y2="288.8" stroke="#333" stroke-width="1"/><line x1="28.2" y1="286.8" x2="28.2" y2="290.8" stroke="#333" stroke-width="1"/><line x1="31.2" y1="288.8" x2="34.2" y2="288.8" stroke="#9a9a9a" stroke-width="1" stroke-dasharray="1 1"/><rect x="37" y="282.0" width="7.5" height="12" rx="1" fill="#111"/><text x="0" y="0" transform="translate(38.3 289.2) scale(0.75 1)" font-family="Liberation Sans" font-weight="bold" font-size="7.5" fill="#f0f0f0">tv</text><rect x="25.2" y="303.3" width="6" height="7" fill="#fff" stroke="#9a9a9a" stroke-width="1" rx="0.8"/><line x1="26.4" y1="306.8" x2="30.0" y2="306.8" stroke="#333" stroke-width="1"/><line x1="28.2" y1="304.8" x2="28.2" y2="308.8" stroke="#333" stroke-width="1"/><line x1="31.2" y1="306.8" x2="34.2" y2="306.8" stroke="#9a9a9a" stroke-width="1" stroke-dasharray="1 1"/><rect x="37" y="300.0" width="7.5" height="12" rx="1" fill="#111"/><text x="0" y="0" transform="translate(38.3 307.2) scale(0.75 1)" font-family="Liberation Sans" font-weight="bold" font-size="7.5" fill="#f0f0f0">tv</text><rect x="25.2" y="321.3" width="6" height="7" fill="#fff" stroke="#9a9a9a" stroke-width="1" rx="0.8"/><line x1="26.4" y1="324.8" x2="30.0" y2="324.8" stroke="#333" stroke-width="1"/><line x1="28.2" y1="322.8" x2="28.2" y2="326.8" stroke="#333" stroke-width="1"/><line x1="31.2" y1="324.8" x2="34.2" y2="324.8" stroke="#9a9a9a" stroke-width="1" stroke-dasharray="1 1"/><rect x="37" y="318.0" width="7.5" height="12" rx="1" fill="#111"/><text x="0" y="0" transform="translate(38.3 325.2) scale(0.75 1)" font-family="Liberation Sans" font-weight="bold" font-size="7.5" fill="#f0f0f0">tv</text><rect x="25.2" y="339.3" width="6" height="7" fill="#fff" stroke="#9a9a9a" stroke-width="1" rx="0.8"/><line x1="26.4" y1="342.8" x2="30.0" y2="342.8" stroke="#333" stroke-width="1"/><line x1="28.2" y1="340.8" x2="28.2" y2="344.8" stroke="#333" stroke-width="1"/><line x1="31.2" y1="342.8" x2="34.2" y2="342.8" stroke="#9a9a9a" stroke-width="1" stroke-dasharray="1 1"/><rect x="37" y="336.0" width="7.5" height="12" rx="1" fill="#111"/><text x="0" y="0" transform="translate(38.3 343.2) scale(0.75 1)" font-family="Liberation Sans" font-weight="bold" font-size="7.5" fill="#f0f0f0">tv</text><rect x="25.2" y="357.3" width="6" height="7" fill="#fff" stroke="#9a9a9a" stroke-width="1" rx="0.8"/><line x1="26.4" y1="360.8" x2="30.0" y2="360.8" stroke="#333" stroke-width="1"/><line x1="28.2" y1="358.8" x2="28.2" y2="362.8" stroke="#333" stroke-width="1"/><line x1="31.2" y1="360.8" x2="34.2" y2="360.8" stroke="#9a9a9a" stroke-width="1" stroke-dasharray="1 1"/><rect x="37" y="354.0" width="7.5" height="12" rx="1" fill="#111"/><text x="0" y="0" transform="translate(38.3 361.2) scale(0.75 1)" font-family="Liberation Sans" font-weight="bold" font-size="7.5" fill="#f0f0f0">tv</text><rect x="25.2" y="375.3" width="6" height="7" fill="#fff" stroke="#9a9a9a" stroke-width="1" rx="0.8"/><line x1="26.4" y1="378.8" x2="30.0" y2="378.8" stroke="#333" stroke-width="1"/><line x1="28.2" y1="376.8" x2="28.2" y2="380.8" stroke="#333" stroke-width="1"/><line x1="31.2" y1="378.8" x2="34.2" y2="378.8" stroke="#9a9a9a" stroke-width="1" stroke-dasharray="1 1"/><rect x="37" y="372.0" width="7.5" height="12" rx="1" fill="#111"/><text x="0" y="0" transform="translate(38.3 379.2) scale(0.75 1)" font-family="Liberation Sans" font-weight="bold" font-size="7.5" fill="#f0f0f0">tv</text><rect x="25.2" y="393.3" width="6" height="7" fill="#fff" stroke="#9a9a9a" stroke-width="1" rx="0.8"/><line x1="26.4" y1="396.8" x2="30.0" y2="396.8" stroke="#333" stroke-width="1"/><line x1="28.2" y1="394.8" x2="28.2" y2="398.8" stroke="#333" stroke-width="1"/><line x1="31.2" y1="396.8" x2="34.2" y2="396.8" stroke="#9a9a9a" stroke-width="1" stroke-dasharray="1 1"/><rect x="37" y="390.0" width="7.5" height="12" rx="1" fill="#111"/><text x="0" y="0" transform="translate(38.3 397.2) scale(0.75 1)" font-family="Liberation Sans" font-weight="bold" font-size="7.5" fill="#f0f0f0">tv</text><rect x="12.5" y="411.3" width="6" height="7" fill="#fff" stroke="#9a9a9a" stroke-width="1" rx="0.8"/><line x1="13.7" y1="414.8" x2="17.3" y2="414.8" stroke="#333" stroke-width="1"/><line x1="15.5" y1="412.8" x2="15.5" y2="416.8" stroke="#333" stroke-width="1"/><line x1="18.5" y1="414.8" x2="21.5" y2="414.8" stroke="#9a9a9a" stroke-width="1" stroke-dasharray="1 1"/><rect x="12.5" y="429.2" width="6" height="7" fill="#fff" stroke="#9a9a9a" stroke-width="1" rx="0.8"/><line x1="13.7" y1="432.7" x2="17.3" y2="432.7" stroke="#333" stroke-width="1"/><line x1="15.5" y1="430.7" x2="15.5" y2="434.7" stroke="#333" stroke-width="1"/><line x1="18.5" y1="432.7" x2="21.5" y2="432.7" stroke="#9a9a9a" stroke-width="1" stroke-dasharray="1 1"/><rect x="12.5" y="447.1" width="6" height="7" fill="#fff" stroke="#9a9a9a" stroke-width="1" rx="0.8"/><line x1="13.7" y1="450.6" x2="17.3" y2="450.6" stroke="#333" stroke-width="1"/><line x1="15.5" y1="448.6" x2="15.5" y2="452.6" stroke="#333" stroke-width="1"/><line x1="18.5" y1="450.6" x2="21.5" y2="450.6" stroke="#9a9a9a" stroke-width="1" stroke-dasharray="1 1"/><rect x="12.5" y="465.0" width="6" height="7" fill="#fff" stroke="#9a9a9a" stroke-width="1" rx="0.8"/><line x1="13.7" y1="468.5" x2="17.3" y2="468.5" stroke="#333" stroke-width="1"/><line x1="15.5" y1="466.5" x2="15.5" y2="470.5" stroke="#333" stroke-width="1"/><line x1="18.5" y1="468.5" x2="21.5" y2="468.5" stroke="#9a9a9a" stroke-width="1" stroke-dasharray="1 1"/><rect x="23" y="406" width="8.5" height="13" fill="#f4f8ff" stroke="#34508a" stroke-width="1"/><path d="M24 410 h6.5 M24 413 h6.5 M24 416 h6.5 M26 410 v8 M29 410 v8" stroke="#34508a" stroke-width="0.7"/><rect x="24" y="430" width="8" height="7" fill="#f4e43a"/><path d="M25.5 430 v-3 q2.5 -3 5 0 v3" stroke="#bbb" stroke-width="1.2" fill="none"/><rect x="23.5" y="443" width="8" height="12" fill="#fff" stroke="#bbb" stroke-width="0.8"/><path d="M25 446 h5 M25 449 h3" stroke="#46a" stroke-width="0.8"/><rect x="27.5" y="450" width="5" height="5" fill="#f0d030"/><path d="M23 462 l3 5 l3 -4 l2 2 l1 8 l-3 -4 l-3 1z" fill="#6a6a6a"/></svg>
<span class="t" style="left:307.5px;top:236.0px;font:normal normal 10px/10px 'Liberation Sans';color:#3a3a8c;transform:scaleX(0.7528);">Transponder:</span>
<span class="t" style="left:309.7px;top:253.1px;font:normal bold 10.3px/10.3px 'Liberation Sans';color:#111;transform:scaleX(0.6737);-webkit-text-stroke:0">Frequency:</span>
<span class="t" style="left:364.5px;top:253.0px;font:normal normal 10.5px/10.5px 'Liberation Sans';color:#222;transform:scaleX(0.6952);">11385,909 MHz</span>
<span class="t" style="left:309.7px;top:272.2px;font:normal bold 10.3px/10.3px 'Liberation Sans';color:#111;transform:scaleX(0.6958);-webkit-text-stroke:0">Polarization:</span>
<span class="t" style="left:364.5px;top:272.0px;font:normal normal 10.5px/10.5px 'Liberation Sans';color:#222;transform:scaleX(0.7403);">Horizontal</span>
<span class="t" style="left:309.7px;top:291.3px;font:normal bold 10.3px/10.3px 'Liberation Sans';color:#111;transform:scaleX(0.6883);-webkit-text-stroke:0">Symbol Rate:</span>
<span class="t" style="left:364.5px;top:291.1px;font:normal normal 10.5px/10.5px 'Liberation Sans';color:#222;transform:scaleX(0.6588);">29499,741 Ks</span>
<span class="t" style="left:309.7px;top:310.3px;font:normal bold 10.3px/10.3px 'Liberation Sans';color:#111;transform:scaleX(0.6866);-webkit-text-stroke:0">Standard:</span>
<span class="t" style="left:364.5px;top:310.2px;font:normal normal 10.5px/10.5px 'Liberation Sans';color:#222;transform:scaleX(0.6300);">DVB-S2</span>
<span class="t" style="left:309.7px;top:329.4px;font:normal bold 10.3px/10.3px 'Liberation Sans';color:#111;transform:scaleX(0.7404);-webkit-text-stroke:0">Modulation:</span>
<span class="t" style="left:364.5px;top:329.2px;font:normal normal 10.5px/10.5px 'Liberation Sans';color:#222;transform:scaleX(0.5852);">QPSK2</span>
<span class="t" style="left:309.7px;top:348.4px;font:normal bold 10.3px/10.3px 'Liberation Sans';color:#111;transform:scaleX(0.6034);-webkit-text-stroke:0">FEC:</span>
<span class="t" style="left:364.5px;top:348.3px;font:normal normal 10.5px/10.5px 'Liberation Sans';color:#222;transform:scaleX(0.6982);">8/9</span>
<span class="t" style="left:309.7px;top:367.5px;font:normal bold 10.3px/10.3px 'Liberation Sans';color:#111;transform:scaleX(0.6808);-webkit-text-stroke:0">RollOff:</span>
<span class="t" style="left:364.5px;top:367.3px;font:normal normal 10.5px/10.5px 'Liberation Sans';color:#222;transform:scaleX(0.6654);">0.25</span>
<span class="t" style="left:309.7px;top:386.6px;font:normal bold 10.3px/10.3px 'Liberation Sans';color:#111;transform:scaleX(0.6796);-webkit-text-stroke:0">Pilot:</span>
<span class="t" style="left:364.5px;top:386.4px;font:normal normal 10.5px/10.5px 'Liberation Sans';color:#222;transform:scaleX(0.6143);">OFF</span>
<span class="t" style="left:309.7px;top:405.6px;font:normal bold 10.3px/10.3px 'Liberation Sans';color:#111;transform:scaleX(0.6795);-webkit-text-stroke:0">Spectrum:</span>
<span class="t" style="left:364.5px;top:405.5px;font:normal normal 10.5px/10.5px 'Liberation Sans';color:#222;transform:scaleX(0.7193);">Inverted</span>
<span class="t" style="left:309.7px;top:424.7px;font:normal bold 10.3px/10.3px 'Liberation Sans';color:#111;transform:scaleX(0.6896);-webkit-text-stroke:0">Frame Type:</span>
<span class="t" style="left:364.5px;top:424.5px;font:normal normal 10.5px/10.5px 'Liberation Sans';color:#222;transform:scaleX(0.6923);">Long Frame</span>
<span class="t" style="left:309.7px;top:443.7px;font:normal bold 10.3px/10.3px 'Liberation Sans';color:#111;transform:scaleX(0.7196);-webkit-text-stroke:0">Code Mode:</span>
<span class="t" style="left:364.5px;top:443.6px;font:normal normal 10.5px/10.5px 'Liberation Sans';color:#222;transform:scaleX(0.6563);">CCM</span>
<span class="t" style="left:309.7px;top:462.8px;font:normal bold 10.3px/10.3px 'Liberation Sans';color:#111;transform:scaleX(0.6894);-webkit-text-stroke:0">Stream type:</span>
<span class="t" style="left:364.5px;top:462.6px;font:normal normal 10.5px/10.5px 'Liberation Sans';color:#222;transform:scaleX(0.7206);">Transport</span>
<span class="t" style="left:309.7px;top:481.9px;font:normal bold 10.3px/10.3px 'Liberation Sans';color:#111;transform:scaleX(0.6229);-webkit-text-stroke:0">ISSYI</span>
<span class="t" style="left:364.5px;top:481.7px;font:normal normal 10.5px/10.5px 'Liberation Sans';color:#222;transform:scaleX(0.6286);">OFF</span>
<span class="t" style="left:309.7px;top:500.9px;font:normal bold 10.3px/10.3px 'Liberation Sans';color:#111;transform:scaleX(0.6873);-webkit-text-stroke:0">NPD:</span>
<span class="t" style="left:364.5px;top:500.8px;font:normal normal 10.5px/10.5px 'Liberation Sans';color:#222;transform:scaleX(0.6286);">OFF</span>
<span class="t" style="left:309.7px;top:520.0px;font:normal bold 10.3px/10.3px 'Liberation Sans';color:#111;transform:scaleX(0.6622);-webkit-text-stroke:0">RF Level:</span>
<span class="t" style="left:364.5px;top:519.8px;font:normal normal 10.5px/10.5px 'Liberation Sans';color:#222;transform:scaleX(0.6753);">-54 dBm</span>
<span class="t" style="left:309.7px;top:539.0px;font:normal bold 10.3px/10.3px 'Liberation Sans';color:#111;transform:scaleX(0.6686);-webkit-text-stroke:0">BitRate:</span>
<span class="t" style="left:364.5px;top:538.9px;font:normal normal 10.5px/10.5px 'Liberation Sans';color:#222;transform:scaleX(0.7201);">52,125 Mbit/s</span>
<span class="t" style="left:309.7px;top:558.1px;font:normal bold 10.3px/10.3px 'Liberation Sans';color:#111;transform:scaleX(0.6986);-webkit-text-stroke:0">Carrier Width:</span>
<span class="t" style="left:364.5px;top:557.9px;font:normal normal 10.5px/10.5px 'Liberation Sans';color:#222;transform:scaleX(0.6887);">36,874 MHz</span>
<span class="t" style="left:309.7px;top:582.9px;font:normal bold 10.3px/10.3px 'Liberation Sans';color:#111;transform:scaleX(0.6989);-webkit-text-stroke:0">MIS:</span>
<div style="position:absolute;left:364.2px;top:577.2px;width:52.10000000000002px;height:20.09999999999991px;background:#e6e6e6;border:1px solid #cfcfcf;box-sizing:border-box"></div>
<span class="t" style="left:366.6px;top:582.6px;font:normal normal 10.5px/10.5px 'Liberation Sans';color:#9a9a9a;transform:scaleX(0.7328);">Single</span>
<svg width="1200" height="841"><path d="M408 586 l2.5 2.5 l2.5 -2.5" stroke="#aaa" stroke-width="1" fill="none"/></svg>
<div style="position:absolute;left:8px;top:627px;width:52px;height:13px;background:#90ee90;border:1px solid #7ccf7c;box-sizing:border-box"></div>
<span class="t" style="left:24.7px;top:628.4px;font:italic normal 10.5px/10.5px 'Liberation Sans';color:#1a4a1a;transform:scaleX(0.5372);">PAT (1)</span>
<div style="position:absolute;left:65px;top:627px;width:52px;height:13px;background:#90ee90;border:1px solid #7ccf7c;box-sizing:border-box"></div>
<span class="t" style="left:79.7px;top:628.4px;font:italic normal 10.5px/10.5px 'Liberation Sans';color:#1a4a1a;transform:scaleX(0.5187);">PMT (13)</span>
<div style="position:absolute;left:121.5px;top:627px;width:52.099999999999994px;height:13px;background:#90ee90;border:1px solid #7ccf7c;box-sizing:border-box"></div>
<span class="t" style="left:134.6px;top:628.4px;font:italic normal 10.5px/10.5px 'Liberation Sans';color:#1a4a1a;transform:scaleX(0.5368);">SDT (209)</span>
<div style="position:absolute;left:178.5px;top:627px;width:51.5px;height:13px;background:#90ee90;border:1px solid #7ccf7c;box-sizing:border-box"></div>
<span class="t" style="left:194.2px;top:628.4px;font:italic normal 10.5px/10.5px 'Liberation Sans';color:#1a4a1a;transform:scaleX(0.5558);">CAT (1)</span>
<div style="position:absolute;left:235.5px;top:627px;width:53.5px;height:13px;background:#90ee90;border:1px solid #7ccf7c;box-sizing:border-box"></div>
<span class="t" style="left:253.0px;top:628.4px;font:italic normal 10.5px/10.5px 'Liberation Sans';color:#1a4a1a;transform:scaleX(0.5662);">NIT (1)</span>
<div style="position:absolute;left:302px;top:618.5px;width:120px;height:25.0px;background:#fff;border:1px solid #b8b8b8;box-sizing:border-box"></div>
<svg width="1200" height="841"><rect x="357.5" y="624" width="10" height="14" fill="#fff" stroke="#c9b28a" stroke-width="0.8"/><rect x="358" y="627.5" width="9" height="3" fill="#4a8ad0"/><path d="M358 633 h9 M358 636 h9" stroke="#6a8ab0" stroke-width="0.7"/></svg>
<div style="position:absolute;left:5px;top:654.5px;width:40.5px;height:19.100000000000023px;border:1px solid #c8c8c8;box-sizing:border-box;background:linear-gradient(#fafafa 0,#f0f0f0 45%,#60e060 52%,#90ee90 100%)"></div>
<span class="t" style="left:12.2px;top:659.6px;font:normal normal 10.5px/10.5px 'Liberation Sans';color:#0e3a0e;transform:scaleX(0.7185);">Present</span>
<div style="position:absolute;left:5px;top:678.6px;width:40.5px;height:19.0px;border:1px solid #c8c8c8;box-sizing:border-box;background:linear-gradient(#fafafa 0,#f0f0f0 45%,#60e060 52%,#90ee90 100%)"></div>
<span class="t" style="left:17.8px;top:683.7px;font:normal normal 10.5px/10.5px 'Liberation Sans';color:#0e3a0e;transform:scaleX(0.6761);">Lock</span>
<div style="position:absolute;left:48.5px;top:654.5px;width:184.5px;height:19.100000000000023px;border:1px solid #c8c8c8;box-sizing:border-box;background:linear-gradient(#fff 0,#fcfcfc 45%,#e8e8e8 52%,#f6f6f6 100%)"></div>
<div style="position:absolute;left:49.5px;top:664.0px;width:17.5px;height:8.600000000000023px;background:#f06060"></div>
<div style="position:absolute;left:67px;top:664.0px;width:11px;height:8.600000000000023px;background:#f6f060"></div>
<span class="t" style="left:121.9px;top:659.6px;font:normal normal 10.5px/10.5px 'Liberation Sans';color:#111;transform:scaleX(0.6647);">SNR: 8,0 dB</span>
<div style="position:absolute;left:236.5px;top:654.5px;width:184.5px;height:19.100000000000023px;border:1px solid #c8c8c8;box-sizing:border-box;background:linear-gradient(#fff 0,#fcfcfc 45%,#e8e8e8 52%,#f6f6f6 100%)"></div>
<span class="t" style="left:306.6px;top:659.6px;font:normal normal 10.5px/10.5px 'Liberation Sans';color:#111;transform:scaleX(0.6589);">BER: &lt;1.0E-7</span>
<div style="position:absolute;left:48.5px;top:678.6px;width:184.5px;height:19.0px;border:1px solid #c8c8c8;box-sizing:border-box;background:#fff"></div>
<div style="position:absolute;left:49.5px;top:688px;width:17.5px;height:8.600000000000023px;background:#f06060"></div>
<div style="position:absolute;left:67px;top:688px;width:165px;height:8.600000000000023px;background:linear-gradient(90deg,#f6f060 0,#f6f060 41%,#f4f8e8 52%,#5ee85e 64%,#5ee85e 100%)"></div>
<span class="t" style="left:117.9px;top:684.0px;font:normal normal 10.5px/10.5px 'Liberation Sans';color:#111;transform:scaleX(0.7098);">Quality: 100%</span>
<div style="position:absolute;left:236.5px;top:678.6px;width:184.5px;height:19.0px;border:1px solid #c8c8c8;box-sizing:border-box;background:linear-gradient(#fff 0,#fcfcfc 45%,#e8e8e8 52%,#f6f6f6 100%)"></div>
<div style="position:absolute;left:237.5px;top:688.1px;width:17.5px;height:8.5px;background:#f06060"></div>
<div style="position:absolute;left:255px;top:688.1px;width:53.69999999999999px;height:8.5px;background:#f6f060"></div>
<span class="t" style="left:312.0px;top:683.7px;font:normal normal 10.5px/10.5px 'Liberation Sans';color:#111;transform:scaleX(0.6737);">Level: 39%</span>
<span class="t" style="left:0.5px;top:713.1px;font:normal normal 10.5px/10.5px 'Liberation Sans';color:#111;transform:scaleX(0.7386);">Locked -&gt; Uptime: 00:02:13</span>
<svg width="1200" height="841"><g fill="#999"><rect x="424" y="717" width="1" height="1"/><rect x="424" y="720" width="1" height="1"/><rect x="421" y="720" width="1" height="1"/><rect x="424" y="723" width="1" height="1"/><rect x="421" y="723" width="1" height="1"/><rect x="418" y="723" width="1" height="1"/></g></svg>
<div style="position:absolute;left:430px;top:141px;width:368px;height:8px;background:linear-gradient(rgba(0,0,0,0),rgba(0,0,0,.14))"></div>
<div style="position:absolute;left:792px;top:149px;width:6px;height:588px;background:linear-gradient(90deg,rgba(0,0,0,.16),rgba(0,0,0,0))"></div>
<div style="position:absolute;left:430px;top:731px;width:368px;height:6px;background:linear-gradient(rgba(0,0,0,.16),rgba(0,0,0,0))"></div>
<div style="position:absolute;left:430px;top:149px;width:362px;height:582px;background:#fff;border:1px solid #6a6a6a;border-left-color:#fff;border-bottom-color:#777;box-sizing:border-box"></div>
<div style="position:absolute;left:430px;top:201px;width:361px;height:451px;background:#000"></div>
<svg width="1200" height="841"><path d="M440 155.5 l-5 14 h10z" fill="#f08a1c"/><path d="M438.3 160.5 h3.4 l0.9 3 h-5.2z" fill="#fff"/><rect x="434.5" y="169" width="11" height="2.5" fill="#e86a10"/><path d="M712.5 164 h7" stroke="#888" stroke-width="1"/><rect x="741.5" y="158.5" width="6.5" height="9.5" fill="none" stroke="#888" stroke-width="1"/><path d="M772.5 157.5 l7 10.5 M779.5 157.5 l-7 10.5" stroke="#888" stroke-width="1"/></svg>
<span class="t" style="left:449.0px;top:158.5px;font:normal normal 11.5px/11.5px 'Liberation Sans';color:#a4a4a4;transform:scaleX(0.6711);-webkit-text-stroke:0">NHL: Boston Bruins @ NY Rangers - VLC media player</span>
<span class="t" style="left:434.5px;top:184.2px;font:normal normal 11.5px/11.5px 'Liberation Sans';color:#b8b8b8;transform:scaleX(0.7456);-webkit-text-stroke:0">Médium</span>
<span class="t" style="left:475.5px;top:184.2px;font:normal normal 11.5px/11.5px 'Liberation Sans';color:#b8b8b8;transform:scaleX(0.6692);-webkit-text-stroke:0">Prehravanie</span>
<span class="t" style="left:527.0px;top:184.2px;font:normal normal 11.5px/11.5px 'Liberation Sans';color:#b8b8b8;transform:scaleX(0.7223);-webkit-text-stroke:0">Zvuk</span>
<span class="t" style="left:556.0px;top:184.2px;font:normal normal 11.5px/11.5px 'Liberation Sans';color:#b8b8b8;transform:scaleX(0.6845);-webkit-text-stroke:0">Video</span>
<span class="t" style="left:586.0px;top:184.2px;font:normal normal 11.5px/11.5px 'Liberation Sans';color:#b8b8b8;transform:scaleX(0.7314);-webkit-text-stroke:0">Titulky</span>
<span class="t" style="left:621.0px;top:184.2px;font:normal normal 11.5px/11.5px 'Liberation Sans';color:#b8b8b8;transform:scaleX(0.6771);-webkit-text-stroke:0">Nástroje</span>
<span class="t" style="left:661.0px;top:184.2px;font:normal normal 11.5px/11.5px 'Liberation Sans';color:#b8b8b8;transform:scaleX(0.6980);-webkit-text-stroke:0">Zobrazit</span>
<span class="t" style="left:702.0px;top:184.2px;font:normal normal 11.5px/11.5px 'Liberation Sans';color:#b8b8b8;transform:scaleX(0.7129);-webkit-text-stroke:0">Pomocnik</span>
<svg width="1200" height="841"><defs><linearGradient id="cg" x1="0" x2="1"><stop offset="0" stop-color="#e8741a"/><stop offset="0.5" stop-color="#ffa040"/><stop offset="1" stop-color="#d8600c"/></linearGradient><linearGradient id="bg2" x1="0" y1="0" x2="0" y2="1"><stop offset="0" stop-color="#ee7a28"/><stop offset="0.55" stop-color="#f6a030"/><stop offset="1" stop-color="#fac828"/></linearGradient></defs><rect x="564.2" y="367.8" width="71.8" height="103.5" fill="#4a4a4a"/><ellipse cx="601.5" cy="413" rx="30.8" ry="40.6" fill="none" stroke="#14142a" stroke-width="1.5"/><path d="M583 443 L638 443 L646 482 L573 482 Z" fill="url(#bg2)"/><rect x="573" y="482" width="73" height="5.5" fill="#f09818"/><path d="M605 365 q4 -2 8 0 L631 456 q-21 6 -43 0 Z" fill="url(#cg)"/><path d="M598.5 384 q10.5 3 21 0 l4.3 21 q-15 4 -29.6 0z" fill="#f0f0f0"/><path d="M592.5 428 q17 4 33 0 l5.2 27 q-22 6 -43.4 0z" fill="#eeeeee"/><path d="M581 446 L590 385 L611 437 L619 400" fill="none" stroke="#14142a" stroke-width="1.1"/><text x="566.7" y="468.6" font-family="Liberation Serif" font-weight="bold" font-size="13.5" fill="#6e1c1c" transform="translate(566.7 468.6) scale(0.69 1) translate(-566.7 -468.6)">DXSATCS.COM</text></svg>
<span class="t" style="left:433.5px;top:655.6px;font:normal normal 11px/11px 'Liberation Sans';color:#111;transform:scaleX(0.7083);">00:54</span>
<span class="t" style="left:767.0px;top:655.6px;font:normal normal 11px/11px 'Liberation Sans';color:#111;transform:scaleX(0.6901);">00:00</span>
<div style="position:absolute;left:464px;top:655.5px;width:293px;height:6.0px;background:linear-gradient(#f6f6f6,#e6e6e6);border-radius:3px"></div>
<div style="position:absolute;left:440px;top:672.5px;width:16.30000000000001px;height:22.5px;background:#fff;border:1px solid #d4d4d4;box-sizing:border-box"></div>
<div style="position:absolute;left:458px;top:672.5px;width:15.5px;height:22.5px;background:#ececec;border:1px solid #d4d4d4;box-sizing:border-box"></div>
<div style="position:absolute;left:475px;top:672.5px;width:15.5px;height:22.5px;background:#fff;border:1px solid #d4d4d4;box-sizing:border-box"></div>
<div style="position:absolute;left:493px;top:672.5px;width:15.5px;height:22.5px;background:#ececec;border:1px solid #d4d4d4;box-sizing:border-box"></div>
<div style="position:absolute;left:518px;top:672.5px;width:15.5px;height:22.5px;background:#fff;border:1px solid #d4d4d4;box-sizing:border-box"></div>
<div style="position:absolute;left:535px;top:672.5px;width:15.5px;height:22.5px;background:#ececec;border:1px solid #d4d4d4;box-sizing:border-box"></div>
<div style="position:absolute;left:582px;top:672.5px;width:15.5px;height:22.5px;background:#e8e8e8;border:1px solid #d4d4d4;box-sizing:border-box"></div>
<div style="position:absolute;left:599px;top:672.5px;width:15.5px;height:22.5px;background:#e8e8e8;border:1px solid #d4d4d4;box-sizing:border-box"></div>
<div style="position:absolute;left:616px;top:672.5px;width:15.700000000000045px;height:22.5px;background:#e8e8e8;border:1px solid #d4d4d4;box-sizing:border-box"></div>
<div style="position:absolute;left:633.3px;top:672.5px;width:15.700000000000045px;height:22.5px;background:#e8e8e8;border:1px solid #d4d4d4;box-sizing:border-box"></div>
<div style="position:absolute;left:651px;top:672.5px;width:15.700000000000045px;height:22.5px;background:#e8e8e8;border:1px solid #d4d4d4;box-sizing:border-box"></div>
<div style="position:absolute;left:552px;top:672px;width:28px;height:23.5px;background:#fff;border:1px solid #eee;box-sizing:border-box"></div>
<span class="t" style="left:554.5px;top:679.1px;font:normal normal 10.5px/10.5px 'Liberation Sans';color:#666;transform:scaleX(0.6845);">100</span>
<svg width="1200" height="841"><ellipse cx="448.3" cy="683.8" rx="4.2" ry="7" fill="#e80000"/><rect x="461" y="679" width="10" height="9" rx="1" fill="#b8b8b8"/><circle cx="466" cy="683.5" r="2.5" fill="#ececec"/><path d="M478 680 v-4 h8 v3 l2 -1.5 M480 686 h0" stroke="#444" stroke-width="1.4" fill="none"/><text x="477.5" y="692" font-family="Liberation Sans" font-size="7" fill="#444">A B</text><path d="M496.5 677 v13 M499 677 l7 6.5 l-7 6.5z" stroke="#aaa" fill="#bbb" stroke-width="1"/><rect x="521" y="676" width="9.5" height="15" rx="1.5" fill="none" stroke="#444" stroke-width="1.3"/><path d="M521 681 h9.5 M521 686 h9.5" stroke="#444" stroke-width="1.2"/><rect x="538" y="676" width="9.5" height="15" rx="1.5" fill="none" stroke="#ddd" stroke-width="1.2"/><path d="M571.5 678.5 l2 -3 l2 3z M571.5 688 l2 3 l2 -3z" fill="#333"/><ellipse cx="589.8" cy="683.8" rx="4.5" ry="7" fill="#c8c8c8" stroke="#888" stroke-width="0.8"/><ellipse cx="606.8" cy="683.8" rx="4.5" ry="7" fill="#a8a8a8" stroke="#777" stroke-width="0.8"/><ellipse cx="623.8" cy="683.8" rx="4.5" ry="7" fill="#888" stroke="#666" stroke-width="0.8"/><ellipse cx="641.2" cy="683.8" rx="4.5" ry="7" fill="#fff" stroke="#777" stroke-width="0.9"/><ellipse cx="658.8" cy="683.8" rx="4.5" ry="7" fill="#777" stroke="#555" stroke-width="0.8"/></svg>
<div style="position:absolute;left:432.5px;top:698px;width:20.0px;height:29.5px;background:#fff;border:1px solid #d4d4d4;box-sizing:border-box"></div>
<div style="position:absolute;left:461.7px;top:701.7px;width:15.800000000000011px;height:23.0px;background:#fff;border:1px solid #d4d4d4;box-sizing:border-box"></div>
<div style="position:absolute;left:479.5px;top:701.7px;width:15.5px;height:23.0px;background:#fff;border:1px solid #d4d4d4;box-sizing:border-box"></div>
<div style="position:absolute;left:496px;top:701.7px;width:16px;height:23.0px;background:#fff;border:1px solid #d4d4d4;box-sizing:border-box"></div>
<div style="position:absolute;left:522px;top:701.7px;width:15.5px;height:23.0px;background:#ececec;border:1px solid #d4d4d4;box-sizing:border-box"></div>
<div style="position:absolute;left:539px;top:701.7px;width:16px;height:23.0px;background:#fff;border:1px solid #d4d4d4;box-sizing:border-box"></div>
<div style="position:absolute;left:564px;top:701.7px;width:16px;height:23.0px;background:#fff;border:1px solid #d4d4d4;box-sizing:border-box"></div>
<div style="position:absolute;left:599px;top:701.7px;width:16px;height:23.0px;background:#fff;border:1px solid #d4d4d4;box-sizing:border-box"></div>
<div style="position:absolute;left:582px;top:701.7px;width:15.5px;height:23.0px;background:#e6f4fb;border:1px solid #3a5a6a;box-sizing:border-box"></div>
<svg width="1200" height="841"><rect x="437.5" y="704" width="3" height="17" fill="#666"/><rect x="444.5" y="704" width="3" height="17" fill="#666"/><rect x="465" y="708" width="1.6" height="10" fill="#666"/><path d="M467 713 l4 -5 v10z M471 713 l4 -5 v10z" fill="#666"/><rect x="484" y="708" width="6.5" height="10" fill="#666"/><path d="M499.5 708 l4 5 l-4 5z M503.5 708 l4 5 l-4 5z" fill="#666"/><rect x="507.5" y="708" width="1.6" height="10" fill="#666"/><path d="M526 710 v-3 h2.5 M534 710 v-3 h-2.5 M526 716 v3 h2.5 M534 716 v3 h-2.5" stroke="#bbb" stroke-width="1.4" fill="none"/><path d="M543 706 v14 M547 706 v14 M551 706 v14" stroke="#555" stroke-width="1.4"/><path d="M541.5 714 h3 M545.5 709 h3 M549.5 716 h3" stroke="#555" stroke-width="1.6"/><path d="M567.5 707 h9.5 M567.5 712 h9.5 M567.5 717.5 h6" stroke="#5a5a5a" stroke-width="1.7"/><path d="M574.5 715.5 l3 2 l-3 2z" fill="#5a5a5a"/><path d="M586.5 712.5 v-4 q0 -1.5 1.5 -1.5 h5 M594 714.5 v4 q0 1.5 -1.5 1.5 h-5" stroke="#46606e" stroke-width="1.7" fill="none"/><path d="M592.5 704.8 l3 2.2 l-3 2.2z M587.5 717.8 l-3 2.2 l3 2.2z" fill="#46606e"/><path d="M603 707.5 L611 717 M603.5 718.5 L606 715.5 M608.5 710.5 L611.5 707" stroke="#555" stroke-width="1.6" fill="none"/><path d="M612.8 719 l-0.6 -4.2 l-3.4 3z M612.8 705.5 l-4.2 0.3 l3.1 3.2z" fill="#555"/><path d="M715 717 h2.5 l3 -3 v11 l-3 -3 h-2.5z" fill="#666"/><path d="M722 716.5 q1.5 2.5 0 5" stroke="#e0c020" stroke-width="1.2" fill="none"/><path d="M729.5 726 L777.5 705 V726 Z" fill="#fff" stroke="#777" stroke-width="1"/><path d="M730.5 725.5 L758 713.3 V725.5 Z" fill="#3cdc3c"/><g fill="#aaa"><rect x="785" y="717" width="1" height="1"/><rect x="785" y="721" width="1" height="1"/><rect x="781" y="721" width="1" height="1"/></g></svg>
<span class="t" style="left:735.0px;top:704.9px;font:normal normal 9.5px/9.5px 'Liberation Sans';color:#777;transform:scaleX(0.6836);">73%</span>
<span class="t" style="left:1.7px;top:801.7px;font:normal normal 12.5px/12.5px 'Liberation Sans';color:#111;transform:scaleX(0.7008);-webkit-text-stroke:0.1px #111">Double click on a curve on graph to launch the Signal Analyzer</span>
<div style="position:absolute;left:1px;top:821.5px;width:876.5px;height:17.299999999999955px;border:1px solid #c4c4c4;box-sizing:border-box;background:#fff"></div>
<div style="position:absolute;left:2px;top:830px;width:874.5px;height:8px;background:linear-gradient(90deg,#66e866 0,#66e866 650px,#fcfff8 667px,#f8f070 681px,#f8f070 765px,#f06464 766px,#f06464 100%)"></div>
<span class="t" style="left:3.0px;top:825.6px;font:normal normal 10.5px/10.5px 'Liberation Sans';color:#1a4a1a;transform:scaleX(0.7203);-webkit-text-stroke:0.1px #1a4a1a">Speed: ~ 52,330 Mbit/s</span>
<div style="position:absolute;left:880.7px;top:821.4px;width:76.69999999999993px;height:17.0px;border:1px solid #c4c4c4;box-sizing:border-box;background:#fff"></div>
<div style="position:absolute;left:881.7px;top:830px;width:74.69999999999993px;height:7.600000000000023px;background:linear-gradient(90deg,#f06464 0,#f06464 7px,#f8f070 7px,#f8f070 38px,#66e866 46px,#66e866 100%)"></div>
<span class="t" style="left:905.5px;top:825.9px;font:italic normal 10.5px/10.5px 'Liberation Sans';color:#222;transform:scaleX(0.6486);">Q: 100%</span>
<div style="position:absolute;left:961.4px;top:821.4px;width:75.80000000000007px;height:17.0px;border:1px solid #c4c4c4;box-sizing:border-box;background:#fff"></div>
<div style="position:absolute;left:962.4px;top:830px;width:73.80000000000007px;height:7.600000000000023px;background:linear-gradient(90deg,#f06464 0,#f06464 6.5px,#f8f070 6.5px,#f8f070 26px,#ececec 27px,#f2f2f2 100%)"></div>
<span class="t" style="left:988.0px;top:825.9px;font:italic normal 10.5px/10.5px 'Liberation Sans';color:#222;transform:scaleX(0.6574);">L: 39%</span>
<div style="position:absolute;left:1041.2px;top:821.6px;width:28.200000000000045px;height:16.600000000000023px;border:1px solid #c8c8c8;box-sizing:border-box;background:linear-gradient(#fafafa 0,#f4f4f4 50%,#60e060 55%,#90ee90 100%)"></div>
<span class="t" style="left:1049.3px;top:825.6px;font:normal normal 10.5px/10.5px 'Liberation Sans';color:#0e3a0e;transform:scaleX(0.5408);">Lock</span>
<div style="position:absolute;left:1072.8px;top:821.6px;width:27.5px;height:16.600000000000023px;border:1px solid #c8c8c8;box-sizing:border-box;background:#fff"></div>
<span class="t" style="left:1077.0px;top:825.6px;font:normal normal 10.5px/10.5px 'Liberation Sans';color:#222;transform:scaleX(0.5086);">DiSEqC</span>
<div style="position:absolute;left:1103.8px;top:821.6px;width:28.90000000000009px;height:16.600000000000023px;border:1px solid #c8c8c8;box-sizing:border-box;background:linear-gradient(#fafafa 0,#f4f4f4 50%,#60e060 55%,#90ee90 100%)"></div>
<span class="t" style="left:1109.8px;top:825.6px;font:normal normal 10.5px/10.5px 'Liberation Sans';color:#0e3a0e;transform:scaleX(0.5294);">Device</span>
<span class="t" style="left:1139.0px;top:825.8px;font:normal normal 10.5px/10.5px 'Liberation Sans';color:#111;transform:scaleX(0.7472);">Control</span>
<svg width="1200" height="841"><ellipse cx="1171.5" cy="832" rx="3.8" ry="6" fill="#eef4fa" stroke="#b8c8d8" stroke-width="0.8"/><path d="M1170.5 829 v6 M1172.5 829 v6" stroke="#7890b0" stroke-width="0.8"/><path d="M1179 829.5 h4.5 l-2.25 3.5z" fill="#222"/><g fill="#999"><rect x="1196" y="828" width="1.2" height="1.2"/><rect x="1196" y="832" width="1.2" height="1.2"/><rect x="1193" y="832" width="1.2" height="1.2"/><rect x="1196" y="836" width="1.2" height="1.2"/><rect x="1193" y="836" width="1.2" height="1.2"/><rect x="1190" y="836" width="1.2" height="1.2"/></g></svg>
</body></html>
